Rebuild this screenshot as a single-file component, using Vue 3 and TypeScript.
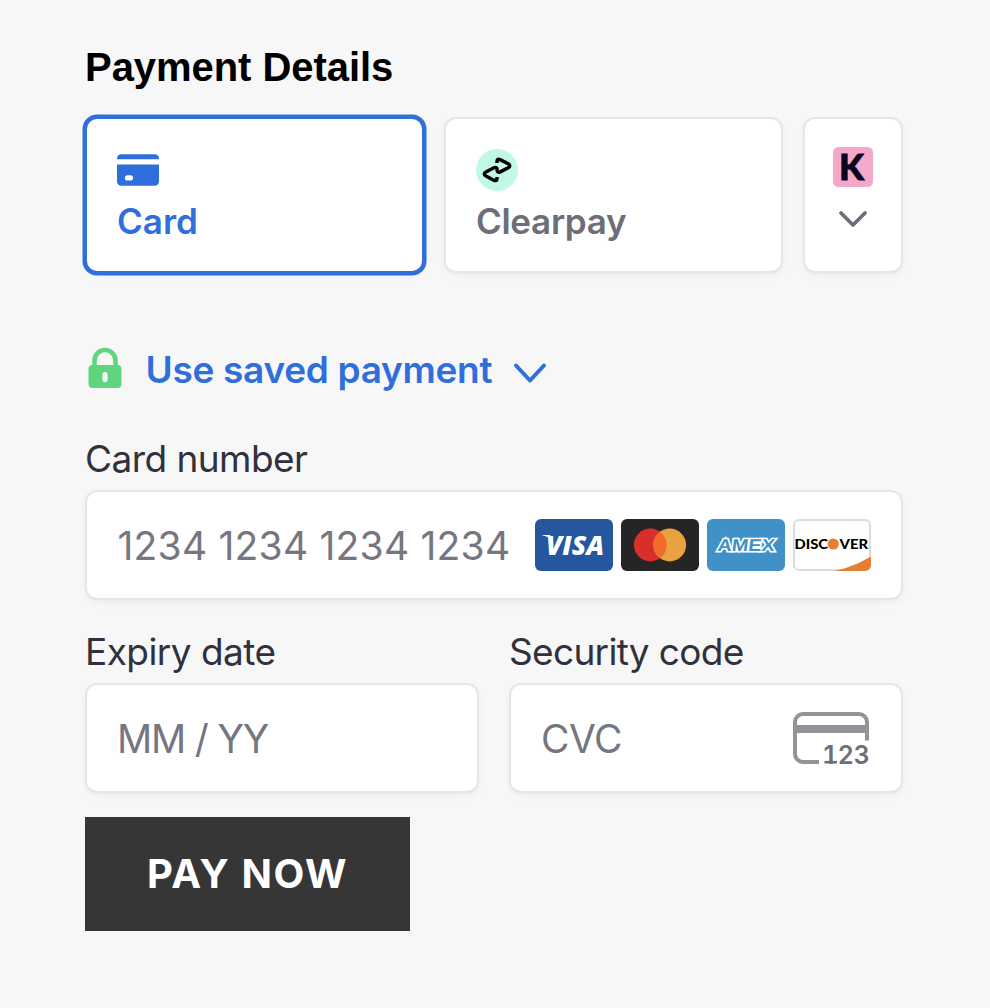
<script setup lang="ts">
import { ref } from 'vue'

const method = ref<'card' | 'clearpay'>('card')
const cardNumber = ref('')
const expiry = ref('')
const cvc = ref('')
</script>

<template>
  <main class="page">
    <h1 class="title">Payment Details</h1>

    <div class="methods">
      <button class="method" :class="{ selected: method === 'card' }" @click="method = 'card'">
        <svg class="card-icon" viewBox="0 0 42 42">
          <path d="M0 10.300V9.500a4.200 4.200 0 0 1 4.200-4.200h33.600A4.200 4.200 0 0 1 42 9.500v.8z" />
          <path fill-rule="evenodd" d="M0 15.600h42v17a4.200 4.200 0 0 1-4.200 4.200H4.200A4.200 4.200 0 0 1 0 32.600zM10.600 26.200a2.700 2.700 0 0 0 0 5.400h2.700a2.700 2.700 0 0 0 0-5.400z" />
        </svg>
        <span class="method-name card-name">Card</span>
      </button>

      <button class="method" :class="{ selected: method === 'clearpay' }" @click="method = 'clearpay'">
        <svg class="clearpay-icon" viewBox="0 0 42 42">
          <circle cx="21" cy="21" r="21" fill="#c2f9e5" />
          <path
            d="M21 13.900V12.500C21 10.300 22.300 9.700 24.100 10.600L32.200 14.700C34.300 15.800 34.300 17.600 32.200 18.700L24.300 22.900C22.500 23.800 21.100 23 21.100 21.200V20.600C21.100 18.600 19.600 17.900 17.900 18.800L9.900 23C7.800 24.100 7.800 25.900 9.900 27L17.900 31.200C19.700 32.100 21 31.400 21 29.500V28.100"
            fill="none" stroke="#000" stroke-width="3.500"
          />
        </svg>
        <span class="method-name clearpay-name">Clearpay</span>
      </button>

      <button class="method more" aria-label="More payment methods">
        <svg class="klarna-icon" viewBox="0 0 40 40">
          <rect width="40" height="40" rx="5.500" fill="#f4a9cb" />
          <text x="6" y="33" textLength="25" lengthAdjust="spacingAndGlyphs" class="klarna-k">K</text>
        </svg>
        <svg class="more-arrow" viewBox="0 0 28 18">
          <path d="M2 3 14 15 26 3" fill="none" stroke="#6d6e78" stroke-width="3.800" stroke-linecap="round" stroke-linejoin="round" />
        </svg>
      </button>
    </div>

    <button class="saved">
      <svg class="lock" viewBox="0 0 34 41">
        <path d="M6.500 18v-5.500a10.500 10.500 0 0 1 21 0V18" fill="none" stroke="#61d57d" stroke-width="4.600" />
        <path fill="#61d57d" fill-rule="evenodd" d="M4.500 17h25a4 4 0 0 1 4 4v15a4 4 0 0 1-4 4h-25a4 4 0 0 1-4-4V21a4 4 0 0 1 4-4zM17 24a2.600 2.600 0 0 0-2.600 2.600v5a2.600 2.600 0 0 0 5.200 0v-5A2.600 2.600 0 0 0 17 24z" />
      </svg>
      <span class="saved-text">Use saved payment</span>
      <svg class="saved-arrow" viewBox="0 0 32 20">
        <path d="M2 2.500 16 17.500 30 2.500" fill="none" stroke="#306fdb" stroke-width="4" stroke-linecap="round" stroke-linejoin="round" />
      </svg>
    </button>

    <label class="field">
      <span class="label number-label">Card number</span>
      <span class="control">
        <input v-model="cardNumber" class="number-input" placeholder="1234 1234 1234 1234" />
        <span class="brands">
          <svg class="brand" viewBox="0 0 78 52">
            <rect width="78" height="52" rx="6" fill="#24579d" />
            <path d="M7.500 16h7.500l3 5c-3-2.500-6-3.700-10.500-4.600z" fill="#fff" />
            <text x="11" y="35.500" textLength="58" lengthAdjust="spacingAndGlyphs" class="visa">VISA</text>
          </svg>
          <svg class="brand" viewBox="0 0 78 52">
            <rect width="78" height="52" rx="6" fill="#252525" />
            <circle cx="29.300" cy="26" r="16.400" fill="#da2e2b" />
            <circle cx="48.700" cy="26" r="16.400" fill="#eaa240" />
            <path d="M39 12.780a16.400 16.400 0 0 1 0 26.440a16.400 16.400 0 0 1 0-26.440z" fill="#f06b2c" />
          </svg>
          <svg class="brand" viewBox="0 0 78 52">
            <rect width="78" height="52" rx="6" fill="#4091c8" />
            <text x="14" y="32" textLength="57" lengthAdjust="spacingAndGlyphs" transform="skewX(-7)" class="amex">AMEX</text>
          </svg>
          <svg class="brand" viewBox="0 0 78 52">
            <rect x="1" y="1" width="76" height="50" rx="5" fill="#fff" stroke="#dcdcdc" stroke-width="2" />
            <path d="M41 52C55 49 67 44 78 37.500V46a6 6 0 0 1-6 6z" fill="#e58033" />
            <text x="1.500" y="30.200" textLength="33.500" lengthAdjust="spacingAndGlyphs" class="discover">DISC</text>
            <circle cx="40.300" cy="25" r="5.600" fill="#e58033" />
            <text x="46.500" y="30.200" textLength="28.500" lengthAdjust="spacingAndGlyphs" class="discover">VER</text>
          </svg>
        </span>
      </span>
    </label>

    <div class="row">
      <label class="field">
        <span class="label expiry-label">Expiry date</span>
        <span class="control"><input v-model="expiry" class="expiry-input" placeholder="MM / YY" /></span>
      </label>
      <label class="field">
        <span class="label security-label">Security code</span>
        <span class="control">
          <input v-model="cvc" class="cvc-input" placeholder="CVC" />
          <svg class="cvc-icon" viewBox="0 0 78 54">
            <path d="M26 51H10a8 8 0 0 1-8-8V11a8 8 0 0 1 8-8h56a8 8 0 0 1 8 8v18.500" fill="none" stroke="#939399" stroke-width="4" />
            <rect x="2" y="14" width="72" height="8" fill="#939399" />
            <text y="52.500" class="cvc-digits"><tspan x="30.500">1</tspan><tspan x="45" textLength="31.500" lengthAdjust="spacingAndGlyphs">23</tspan></text>
            <path d="M31.500 51.200h12.500" stroke="#6d6e78" stroke-width="2.600" />
          </svg>
        </span>
      </label>
    </div>

    <button class="pay">PAY NOW</button>
  </main>
</template>

<style>
body {
  background: #f7f7f7;
}
</style>

<style scoped>
.page {
  box-sizing: border-box;
  width: 990px;
  height: 1008px;
  padding: 44px 87px 0 85px;
  background: #f7f7f7;
  font-family: Inter, "Liberation Sans", sans-serif;
}

button {
  font-family: inherit;
  cursor: pointer;
}

svg {
  flex: none;
  overflow: visible;
}

.title {
  margin: 0;
  font: bold 40px/46px "Liberation Sans", Arial, sans-serif;
  letter-spacing: -0.05px;
  color: #000;
}

.methods {
  display: flex;
  gap: 20px;
  margin-top: 27px;
}

.method {
  box-sizing: border-box;
  display: flex;
  flex-direction: column;
  align-items: flex-start;
  width: 339px;
  height: 156px;
  padding: 30px;
  border: 2px solid #e6e6e6;
  border-radius: 12px;
  background: #fff;
  box-shadow: 0 2px 4px rgba(0, 0, 0, 0.03), 0 4px 12px rgba(0, 0, 0, 0.02);
  color: #6d6e78;
}

.method.selected {
  border-color: #306fdb;
  box-shadow: 0 0 0 2.5px #306fdb, 0 2px 4px rgba(0, 0, 0, 0.03), 0 4px 12px rgba(0, 0, 0, 0.02);
  color: #306fdb;
}

.card-icon,
.clearpay-icon {
  display: block;
  width: 42px;
  height: 42px;
}

.card-icon {
  fill: #306fdb;
}

.method-name {
  margin-top: 8px;
  font-size: 35px;
  font-weight: 600;
  line-height: 44px;
}

.clearpay-name {
  letter-spacing: -0.3px;
}

.method.more {
  align-items: center;
  width: 100px;
  padding: 28px 0 0;
}

.klarna-icon {
  width: 40px;
  height: 40px;
}

.klarna-k {
  font: 900 36px Lato, sans-serif;
  fill: #0b051d;
  stroke: #0b051d;
  stroke-width: 0.8px;
}

.more-arrow {
  width: 28px;
  height: 18px;
  margin-top: 23px;
}

.saved {
  display: flex;
  align-items: center;
  height: 48px;
  margin-top: 73px;
  padding: 0 0 0 3px;
  border: 0;
  background: none;
  color: #306fdb;
}

.lock {
  width: 34px;
  height: 41px;
  margin-bottom: 4px;
}

.saved-text {
  margin-left: 23.5px;
  font-size: 37px;
  font-weight: 600;
  line-height: 48px;
  letter-spacing: -0.3px;
}

.saved-arrow {
  width: 32px;
  height: 20px;
  margin: 5px 0 0 22px;
}

.field {
  display: block;
  min-width: 0;
}

.saved + .field {
  margin-top: 43px;
}

.label {
  display: block;
  height: 53px;
  font-size: 37px;
  line-height: 44px;
  letter-spacing: -0.55px;
  color: #30313d;
}

.security-label {
  letter-spacing: -0.68px;
}

.control {
  box-sizing: border-box;
  display: flex;
  align-items: center;
  height: 110px;
  padding: 0 30px;
  border: 2px solid #e6e6e6;
  border-radius: 12px;
  background: #fff;
  box-shadow: 0 2px 4px rgba(0, 0, 0, 0.03), 0 4px 12px rgba(0, 0, 0, 0.02);
}

input {
  flex: 1;
  min-width: 0;
  padding: 2px 0 0;
  border: 0;
  outline: 0;
  background: transparent;
  font: 39px/48px Inter, "Liberation Sans", sans-serif;
  color: #30313d;
}

input::placeholder {
  color: #757680;
  opacity: 1;
}

.number-input {
  padding-left: 0.5px;
  letter-spacing: 0.22px;
}

.expiry-input {
  letter-spacing: -1.2px;
}

.cvc-input {
  letter-spacing: -0.6px;
}

.brands {
  display: flex;
  gap: 8px;
}

.brand {
  width: 78px;
  height: 52px;
}

.visa {
  font: italic 800 27px "Open Sans", sans-serif;
  fill: #fff;
}

.amex {
  font: bold 17px "Liberation Sans", sans-serif;
  fill: #4091c8;
  stroke: #fff;
  stroke-width: 3px;
  paint-order: stroke;
}

.discover {
  font: 900 14px Lato, sans-serif;
  fill: #000;
}

.row {
  display: grid;
  grid-template-columns: minmax(0, 1fr) minmax(0, 1fr);
  gap: 30px;
  margin-top: 30px;
}

.cvc-icon {
  width: 78px;
  height: 54px;
}

.cvc-digits {
  font: 600 26px Inter, sans-serif;
  fill: #6d6e78;
}

.pay {
  display: block;
  width: 325px;
  height: 114px;
  margin-top: 24px;
  padding: 0 0 2px;
  border: 0;
  background: #363636;
  color: #fff;
  font-size: 40px;
  font-weight: 700;
  letter-spacing: 1.6px;
}
</style>
